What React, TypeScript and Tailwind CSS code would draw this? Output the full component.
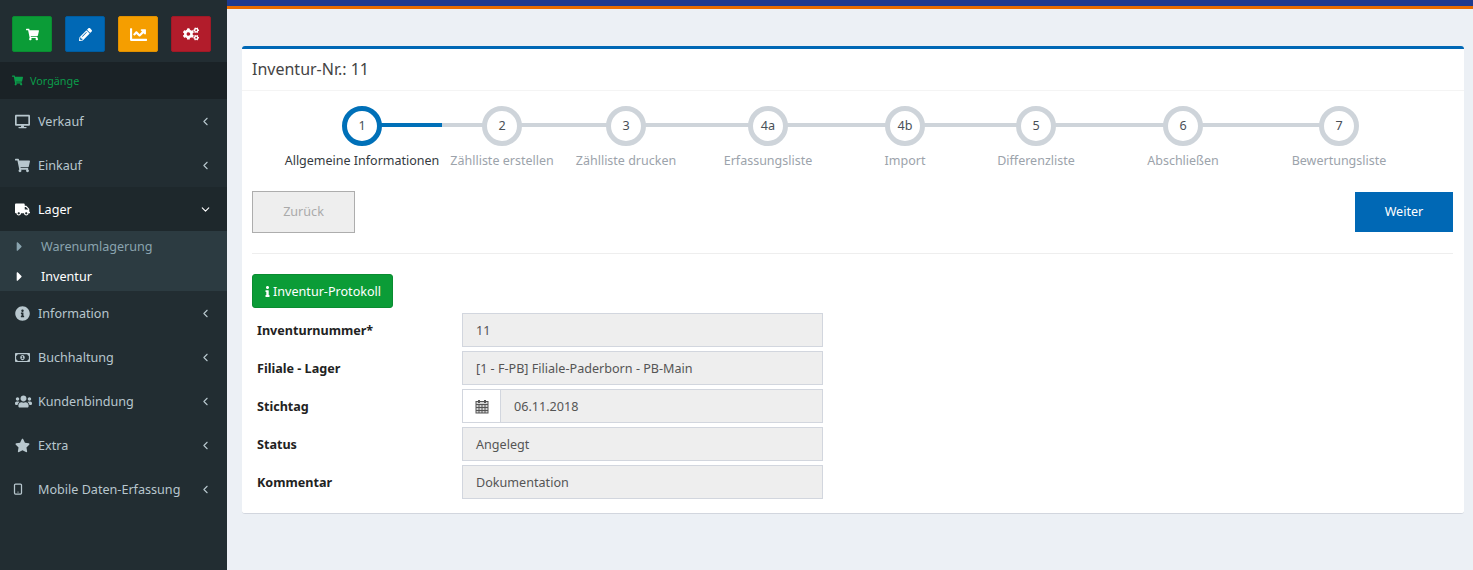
import type { ReactNode } from "react";
import { ChevronLeft, ChevronDown, Smartphone } from "lucide-react";
import {
  FaShoppingCart, FaPencilAlt, FaChartLine, FaCogs, FaDesktop, FaTruck, FaInfoCircle,
  FaRegMoneyBillAlt, FaUsers, FaStar, FaCaretRight, FaInfo,
} from "react-icons/fa";

const STEPS = [
  { n: "1", label: "Allgemeine Informationen", width: "w-[160px]" },
  { n: "2", label: "Zählliste erstellen", width: "w-[120px]" },
  { n: "3", label: "Zählliste drucken", width: "w-[128px]" },
  { n: "4a", label: "Erfassungsliste", width: "w-[156px]" },
  { n: "4b", label: "Import", width: "w-[118px]" },
  { n: "5", label: "Differenzliste", width: "w-[144px]" },
  { n: "6", label: "Abschließen", width: "w-[150px]" },
  { n: "7", label: "Bewertungsliste", width: "w-[162px]" },
];

function CalendarIcon() {
  return (
    <svg width="14" height="15" viewBox="0 0 14 15" fill="none" stroke="currentColor">
      <rect x="1" y="2.5" width="12" height="11.5" fill="currentColor" fillOpacity="0.25" />
      <path d="M1 5.5h12M1 8.5h12M1 11.5h12M4 5v9M7 5v9M10 5v9" />
      <path d="M4 1v3M10 1v3" strokeWidth="2" />
    </svg>
  );
}

function MenuItem({ icon, label }: { icon: ReactNode; label: string }) {
  return (
    <div className="flex items-center h-11 pl-[15px] pr-[15px] text-[#b8c7ce] text-[12.6px]">
      <span className="w-[23px] flex items-center text-[15px]">{icon}</span>
      <span className="pt-[2px]">{label}</span>
      <ChevronLeft size={13} strokeWidth={2} className="ml-auto" />
    </div>
  );
}

function Field({ label, value, date }: { label: string; value: string; date?: boolean }) {
  return (
    <div className="flex items-center h-[34px]">
      <label className="w-[205px] ml-[5px] pt-[2px] font-bold text-[12.6px] text-[#222]">{label}</label>
      <div className="flex w-[361px] h-[34px] border border-[#d2d6de] bg-[#eeeeee] text-[12.6px] text-[#555]">
        {date && (
          <span className="w-[38px] shrink-0 flex items-center justify-center bg-white border-r border-[#d2d6de] text-[#555]">
            <CalendarIcon />
          </span>
        )}
        <span className="flex items-center pl-[13px] pt-[2px]">{value}</span>
      </div>
    </div>
  );
}

export default function App() {
  return (
    <div className="flex h-[570px] overflow-hidden bg-[#ecf0f5] font-['Noto_Sans','Liberation_Sans',sans-serif]">
      <aside className="w-[227px] shrink-0 bg-[#222d32]">
        <div className="flex gap-[13px] h-[62px] pt-4 pl-3">
          <button className="w-10 h-9 rounded-[2px] bg-[#0b9c37] border border-[#0a8c31] text-white flex items-center justify-center text-[13px]"><FaShoppingCart /></button>
          <button className="w-10 h-9 rounded-[2px] bg-[#0068b5] border border-[#005c9f] text-white flex items-center justify-center text-[13px]"><FaPencilAlt /></button>
          <button className="w-10 h-9 rounded-[2px] bg-[#f59e00] border border-[#e09000] text-white flex items-center justify-center text-[17px]"><FaChartLine /></button>
          <button className="w-10 h-9 rounded-[2px] bg-[#b21c2b] border border-[#a01926] text-white flex items-center justify-center text-[16px]"><FaCogs /></button>
        </div>
        <div className="flex items-center h-[37px] pl-3 bg-[#1a2226] text-[#0b9c4a] text-[10.8px]">
          <FaShoppingCart className="text-[11px] mr-[7px]" />
          <span className="pt-[2px]">Vorgänge</span>
        </div>
        <MenuItem icon={<FaDesktop />} label="Verkauf" />
        <MenuItem icon={<FaShoppingCart />} label="Einkauf" />
        <div className="flex items-center h-11 pl-[15px] pr-[15px] bg-[#1e282c] text-white text-[12.6px]">
          <span className="w-[23px] flex items-center text-[15px]"><FaTruck /></span>
          <span className="pt-[2px]">Lager</span>
          <ChevronDown size={13} strokeWidth={2} className="ml-auto" />
        </div>
        <div className="bg-[#2c3b41] h-[60px] text-[12.6px]">
          <div className="flex items-center h-[30px] pl-[12px] text-[#8aa4af]">
            <span className="w-[29px]"><FaCaretRight className="text-[15px]" /></span>
            <span className="pt-[2px]">Warenumlagerung</span>
          </div>
          <div className="flex items-center h-[30px] pl-[12px] text-white">
            <span className="w-[29px]"><FaCaretRight className="text-[15px]" /></span>
            <span className="pt-[2px]">Inventur</span>
          </div>
        </div>
        <MenuItem icon={<FaInfoCircle />} label="Information" />
        <MenuItem icon={<FaRegMoneyBillAlt />} label="Buchhaltung" />
        <MenuItem icon={<FaUsers className="text-[17px]" />} label="Kundenbindung" />
        <MenuItem icon={<FaStar />} label="Extra" />
        <MenuItem icon={<Smartphone size={12} strokeWidth={2.5} className="-ml-[3px]" />} label="Mobile Daten-Erfassung" />
      </aside>

      <main className="flex-1 min-w-0">
        <div className="h-[9px] bg-[#1e3a8f] border-b-[3px] border-[#e86c00]" />
        <div className="ml-[15px] mr-[9px] mt-[37px] h-[468px] bg-white rounded-[3px] border-t-[3px] border-[#0068b5] border-b border-b-[#d2d6de]">
          <div className="h-[42px] flex items-center pl-[10px] pb-[2px] border-b border-[#f4f4f4] text-[16px] leading-none text-[#444]">
            Inventur-Nr.: 11
          </div>
          <div className="flex pl-[40px] pt-[15px]">
            {STEPS.map((s, i) => (
              <div key={s.n} className={`relative flex flex-col items-center shrink-0 ${s.width}`}>
                {i > 0 && <span className="absolute left-0 right-1/2 top-[17px] h-1 bg-[#ced4da]" />}
                {i < STEPS.length - 1 && (
                  <span className={`absolute left-1/2 right-0 top-[17px] h-1 ${i === 0 ? "bg-[#0070b8]" : "bg-[#ced4da]"}`} />
                )}
                <span className={`relative z-10 w-10 h-10 rounded-full bg-white border-[5px] flex items-center justify-center text-[12.6px] text-[#495057] ${i === 0 ? "border-[#0070b8]" : "border-[#ced4da]"}`}>
                  {s.n}
                </span>
                <span className={`mt-[5px] text-[12.5px] leading-[20px] whitespace-nowrap ${i === 0 ? "text-[#343a40]" : "text-[#9ca3ab]"}`}>
                  {s.label}
                </span>
              </div>
            ))}
          </div>
          <div className="mr-[11px] ml-[10px] mt-[20px] h-[63px] flex items-start justify-between border-b border-[#eeeeee]">
            <button className="w-[103px] h-[42px] border border-[#adadad] bg-[#eeeeee] text-[#aaaaaa] text-[12.6px]">Zurück</button>
            <button className="w-[98px] h-10 mt-px bg-[#0068b5] text-white text-[12.6px]">Weiter</button>
          </div>
          <div className="mx-[10px] mt-5">
            <button className="flex items-center w-[141px] h-[34px] pl-[9px] rounded-[3px] bg-[#0b9c37] border border-[#0a8c31] text-white text-[12.6px] whitespace-nowrap">
              <FaInfo className="text-[11px]" />
              <span className="pt-[2px]">Inventur-Protokoll</span>
            </button>
            <div className="mt-[5px] flex flex-col gap-1">
              <Field label="Inventurnummer*" value="11" />
              <Field label="Filiale - Lager" value="[1 - F-PB] Filiale-Paderborn - PB-Main" />
              <Field label="Stichtag" value="06.11.2018" date />
              <Field label="Status" value="Angelegt" />
              <Field label="Kommentar" value="Dokumentation" />
            </div>
          </div>
        </div>
      </main>
    </div>
  );
}
